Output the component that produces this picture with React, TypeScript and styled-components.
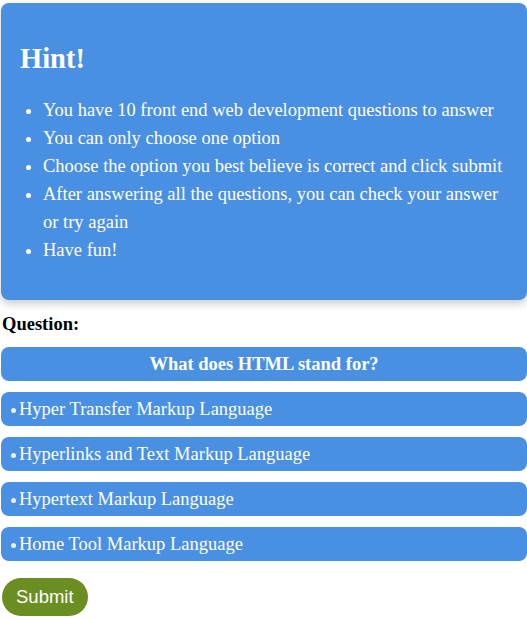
import React from "react";
import styled, { createGlobalStyle } from "styled-components";

const Global = createGlobalStyle`
  html, body { margin: 0; padding: 0; background: #ffffff; }
  body { font-family: "Liberation Serif", "Times New Roman", serif; color: #000; }
`;

const Page = styled.div`
  padding: 3px 0 0 1px;
  display: flex;
  flex-direction: column;
`;

const HintCard = styled.section`
  background: #4a90e2;
  color: #ffffff;
  border-radius: 8px;
  box-shadow: 0 4px 8px rgba(0, 0, 0, 0.2);
  padding: 20px 20px 21px 19px;
`;

const HintTitle = styled.h1`
  font-size: 28.5px;
  font-weight: bold;
  margin: 20px 0 21px 0;
  line-height: 32px;
`;

const HintList = styled.ul`
  margin: 0 0 15px 0;
  padding-left: 23px;
  font-size: 18.5px;
  line-height: 28px;
`;

const QuestionLabel = styled.div`
  font-size: 18.5px;
  font-weight: bold;
  margin: 13px 0 0 1px;
  line-height: 22px;
`;

const Box = styled.div<{ $center?: boolean }>`
  background: #4a90e2;
  color: #ffffff;
  border-radius: 8px;
  height: 34px;
  display: flex;
  align-items: center;
  justify-content: ${(p) => (p.$center ? "center" : "flex-start")};
  font-size: 18.5px;
  font-weight: ${(p) => (p.$center ? "bold" : "normal")};
  padding: 0 8px;
  margin-top: ${(p) => (p.$center ? "12px" : "11px")};
  cursor: pointer;
`;

const Dot = styled.span`
  width: 5px;
  height: 5px;
  border-radius: 50%;
  background: #f0f0f0;
  margin: 3px 3px 0 2px;
  flex-shrink: 0;
`;

const SubmitButton = styled.button`
  align-self: flex-start;
  margin-top: 17px;
  margin-left: 1px;
  background: #6b8e23;
  color: #ffffff;
  border: none;
  border-radius: 19px;
  height: 38px;
  padding: 0 14px;
  font-family: "Liberation Sans", Arial, sans-serif;
  font-size: 18.5px;
  cursor: pointer;
`;

const hints = [
  "You have 10 front end web development questions to answer",
  "You can only choose one option",
  "Choose the option you best believe is correct and click submit",
  "After answering all the questions, you can check your answer or try again",
  "Have fun!",
];

const options = [
  "Hyper Transfer Markup Language",
  "Hyperlinks and Text Markup Language",
  "Hypertext Markup Language",
  "Home Tool Markup Language",
];

export default function App() {
  return (
    <>
      <Global />
      <Page>
        <HintCard>
          <HintTitle>Hint!</HintTitle>
          <HintList>
            {hints.map((h) => (
              <li key={h}>{h}</li>
            ))}
          </HintList>
        </HintCard>
        <QuestionLabel>Question:</QuestionLabel>
        <Box $center>What does HTML stand for?</Box>
        {options.map((o) => (
          <Box key={o}>
            <Dot />
            {o}
          </Box>
        ))}
        <SubmitButton>Submit</SubmitButton>
      </Page>
    </>
  );
}
